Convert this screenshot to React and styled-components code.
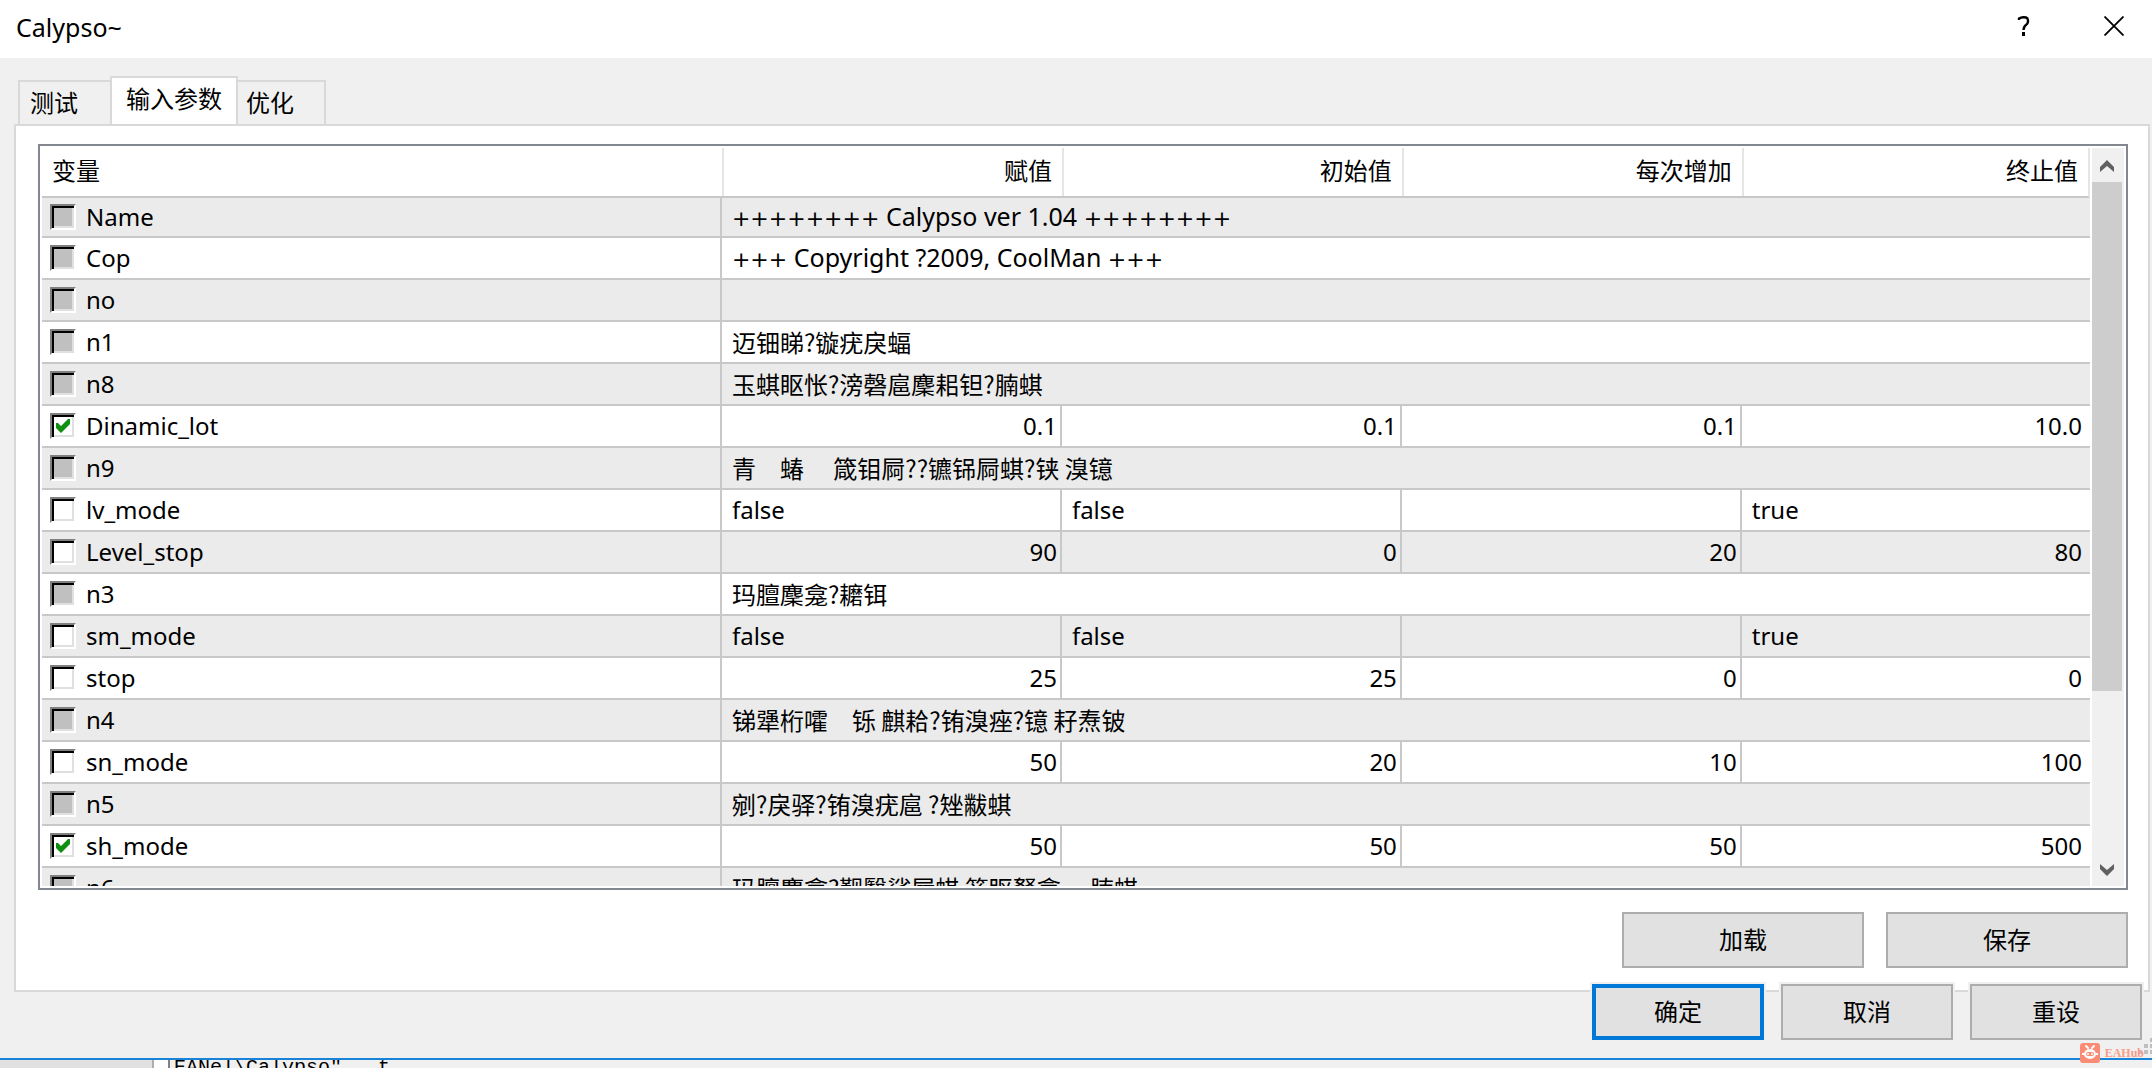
import React, { useState } from "react";
import styled, { createGlobalStyle } from "styled-components";

const GlobalStyle = createGlobalStyle`
  * {
    box-sizing: border-box;
  }

  body {
    margin: 0;
    background-color: #f0f0f0;
    color: #000;
    font-family: "Noto Sans", "Noto Sans CJK SC", sans-serif;
    font-size: 24px;
    line-height: 30px;
  }

  button {
    font-family: "Noto Sans", "Noto Sans CJK SC", sans-serif;
    color: #000;
  }
`;

const Screen = styled.div`
  position: relative;
  display: flex;
  flex-direction: column;
  height: 100vh;
  overflow: hidden;
`;

const Dialog = styled.div`
  flex: 1;
  min-height: 0;
  display: flex;
  flex-direction: column;
  border-bottom: 2px solid #1883d7;
`;

const TitleBar = styled.div`
  display: flex;
  align-items: center;
  justify-content: space-between;
  height: 58px;
  padding: 0 0 4px 16px;
  background-color: #fff;
`;

const Title = styled.h1`
  margin: 0;
  font-size: 25px;
  font-weight: 400;
`;

const TitleActions = styled.div`
  display: flex;
  gap: 14px;
`;

const TitleButton = styled.button`
  display: flex;
  align-items: center;
  justify-content: center;
  width: 76px;
  height: 54px;
  padding: 0 0 2px;
  border: none;
  background: none;
`;

const Tabs = styled.div`
  display: flex;
  align-items: flex-end;
  height: 66px;
  padding-left: 18px;
`;

const Tab = styled.button`
  height: ${(p) => (p.$active ? 50 : 44)}px;
  margin-bottom: ${(p) => (p.$active ? -2 : 0)}px;
  padding: ${(p) => (p.$active ? "0 14px 6px" : "0 30px 0 8px")};
  border: 2px solid #d9d9d9;
  border-bottom: none;
  border-left-width: ${(p) => (p.$last ? 0 : 2)}px;
  border-right-width: ${(p) => (p.$first ? 0 : 2)}px;
  background-color: ${(p) => (p.$active ? "#fff" : "#f0f0f0")};
  font-size: 24px;
  line-height: 30px;

  &:first-child {
    padding: 0 32px 0 10px;
  }
`;

const Pane = styled.div`
  flex: 1;
  min-height: 0;
  display: flex;
  flex-direction: column;
  gap: 22px;
  margin: 0 2px 0 14px;
  padding: 18px 20px 22px 22px;
  border: 2px solid #d9d9d9;
  background-color: #fff;
`;

const List = styled.div`
  flex: 1;
  min-height: 0;
  display: flex;
  gap: 2px;
  padding: 2px;
  border: 2px solid #828790;
`;

const TableArea = styled.div`
  flex: 1;
  min-width: 0;
  overflow: hidden;
`;

const Table = styled.table`
  width: 100%;
  table-layout: fixed;
  border-collapse: separate;
  border-spacing: 0;
`;

const Col = styled.col`
  width: ${(p) => p.$width};
`;

const Th = styled.th`
  height: 50px;
  padding: 0 10px 2px;
  border-bottom: 2px solid #c8c8c8;
  font-weight: 400;
  text-align: right;
  background: linear-gradient(#e5e5e5, #e5e5e5) left / 2px 100% no-repeat;

  &:first-child {
    text-align: left;
    background: none;
  }

  &:last-child {
    border-right: 2px solid #e5e5e5;
  }
`;

const Row = styled.tr`
  background-color: ${(p) => (p.$shaded ? "#ebebeb" : "#fff")};

  &:first-child td {
    height: 40px;
  }
`;

const Td = styled.td`
  height: 42px;
  padding: 0 3px 0 10px;
  border-right: 2px solid #c8c8c8;
  border-bottom: 2px solid #c8c8c8;
  text-align: ${(p) => (p.$number ? "right" : "left")};
  white-space: pre;

  &:first-child {
    padding-left: 8px;
  }

  &:last-child {
    padding-right: 8px;
    border-right: none;
  }
`;

const Cjk = styled.span`
  font-family: "Noto Sans CJK SC", sans-serif;
`;

const Latin = styled.span`
  font-size: 25px;
`;

const Plus = styled.span`
  font-family: "DejaVu Sans", sans-serif;
  font-size: 22px;
`;

const Variable = styled.label`
  display: flex;
  align-items: center;
  gap: 10px;
`;

const Checkbox = styled.input`
  appearance: none;
  width: 26px;
  height: 26px;
  margin: 0;
  border: 2px solid;
  border-color: #808080 #fff #fff #808080;
  background-color: #fff;
  box-shadow: inset 2px 2px 0 #000, inset -2px -2px 0 #e0e0e0;

  &:disabled {
    background-color: #c0c0c0;
  }

  &:checked::before {
    content: "";
    display: block;
    width: 14px;
    height: 14px;
    margin: 4px;
    background-color: #109010;
    clip-path: polygon(0 4px, 2px 4px, 5px 7px, 12px 0, 14px 0, 14px 5px, 5px 14px, 0 9px);
  }
`;

const ScrollBar = styled.div`
  display: flex;
  flex-direction: column;
  width: 32px;
  background-color: #f0f0f0;
`;

const ScrollButton = styled.button`
  display: flex;
  align-items: center;
  justify-content: center;
  width: 30px;
  height: 34px;
  padding: 2px 0 0;
  border: none;
  background: none;
`;

const ScrollTrack = styled.div`
  flex: 1;
`;

const ScrollThumb = styled.div`
  width: 30px;
  height: 76%;
  background-color: #cdcdcd;
`;

const PaneActions = styled.div`
  display: flex;
  justify-content: flex-end;
  gap: 22px;
`;

const Footer = styled.div`
  display: flex;
  justify-content: flex-end;
  gap: 17px;
  margin-top: -8px;
  padding: 0 10px 18px;
`;

const Button = styled.button`
  width: ${(p) => (p.$wide ? 242 : 172)}px;
  height: 56px;
  padding: 0 0 4px;
  border: ${(p) => (p.$primary ? "4px solid #0078d7" : "2px solid #adadad")};
  background-color: #e1e1e1;
  box-shadow: ${(p) => (p.$wide ? "none" : "0 0 0 2px #f0f0f0")};
  font-size: 24px;
`;

const Behind = styled.div`
  display: flex;
  height: 8px;
  overflow: hidden;
  background-color: #f0f0f0;
`;

const BehindPanel = styled.div`
  width: 154px;
  border-right: 2px solid #adadad;
  background-color: #e1e1e1;
`;

const BehindPath = styled.div`
  margin-left: 14px;
  padding-left: 4px;
  border-left: 2px solid #828282;
  font-family: "Liberation Mono", monospace;
  font-size: 20px;
  line-height: 16px;
  white-space: pre;
  box-shadow: -14px 0 0 #fff;
`;

const Grip = styled.svg`
  position: absolute;
  right: 0;
  bottom: 14px;
`;

const Badge = styled.div`
  position: absolute;
  right: 8px;
  bottom: 5px;
  display: flex;
  align-items: center;
  gap: 5px;
  color: #f99b87;
  font-family: "Liberation Serif", serif;
  font-size: 12px;
  font-weight: 700;
  line-height: 20px;
`;

const columns = [
  { title: "变量", width: "33.2%" },
  { title: "赋值", width: "16.6%" },
  { title: "初始值", width: "16.6%" },
  { title: "每次增加", width: "16.6%" },
  { title: "终止值", width: "17%" },
];

const initialParams = [
  { name: "Name", text: "++++++++ Calypso ver 1.04 ++++++++" },
  { name: "Cop", text: "+++ Copyright ?2009, CoolMan +++" },
  { name: "no", text: "" },
  { name: "n1", text: "迈钿睇?镟疣戾蝠", cjk: true },
  { name: "n8", text: "玉蜞眍怅?滂磬扈麇耜钽?腩蜞", cjk: true },
  { name: "Dinamic_lot", values: ["0.1", "0.1", "0.1", "10.0"], checked: true },
  { name: "n9", text: "青　蝽　 箴钼屙??镳铞屙蜞?铗 溴镱", cjk: true },
  { name: "lv_mode", values: ["false", "false", "", "true"] },
  { name: "Level_stop", values: ["90", "0", "20", "80"] },
  { name: "n3", text: "玛膻麇龛?耱铒", cjk: true },
  { name: "sm_mode", values: ["false", "false", "", "true"] },
  { name: "stop", values: ["25", "25", "0", "0"] },
  { name: "n4", text: "锑犟桁嚯　铄 麒耠?铕溴痤?镱 耔焘铍", cjk: true },
  { name: "sn_mode", values: ["50", "20", "10", "100"] },
  { name: "n5", text: "剜?戾驿?铕溴疣扈 ?矬黻蜞", cjk: true },
  { name: "sh_mode", values: ["50", "50", "50", "500"], checked: true },
  { name: "n6", text: "玛膻麇龛?觐翳鲨屙蜞 箪眍驽龛　 腩蜞", cjk: true },
];

const isNumber = (value) => value !== "" && !isNaN(value);

const ParamText = ({ text, cjk }) => {
  if (cjk) return <Cjk>{text}</Cjk>;

  return (
    <Latin>
      {text
        .split(/(\++)/)
        .map((part, i) =>
          part.startsWith("+") ? <Plus key={i}>{part}</Plus> : part
        )}
    </Latin>
  );
};

const App = () => {
  const [params, setparams] = useState(initialParams);

  const toggle = (name) => {
    setparams(
      params.map((p) => (p.name === name ? { ...p, checked: !p.checked } : p))
    );
  };

  return (
    <Screen>
      <GlobalStyle />
      <Dialog>
        <TitleBar>
          <Title>Calypso~</Title>
          <TitleActions>
            <TitleButton aria-label="Help">
              <svg width="14" height="20" viewBox="0 0 14 20" fill="none">
                <path
                  d="M2 4V2.500C4 1.300 7 1 9 1.500c2.500.8 2.500 4.500 1 6.500C8 9.500 6.500 10.500 6.500 14"
                  stroke="#000"
                  strokeWidth="2.400"
                />
                <rect x="5" y="16" width="3" height="4" fill="#000" />
              </svg>
            </TitleButton>
            <TitleButton aria-label="Close">
              <svg width="20" height="20" viewBox="0 0 20 20">
                <path d="M.5.5l19 19M19.500.5l-19 19" stroke="#000" strokeWidth="1.800" />
              </svg>
            </TitleButton>
          </TitleActions>
        </TitleBar>

        <Tabs role="tablist">
          <Tab role="tab" $first>
            测试
          </Tab>
          <Tab role="tab" $active aria-selected="true">
            输入参数
          </Tab>
          <Tab role="tab" $last>
            优化
          </Tab>
        </Tabs>

        <Pane>
          <List>
            <TableArea>
              <Table>
                <colgroup>
                  {columns.map((c) => (
                    <Col key={c.title} $width={c.width} />
                  ))}
                </colgroup>
                <thead>
                  <tr>
                    {columns.map((c) => (
                      <Th key={c.title}>{c.title}</Th>
                    ))}
                  </tr>
                </thead>
                <tbody>
                  {params.map((p, i) => (
                    <Row key={p.name} $shaded={i % 2 === 0}>
                      <Td>
                        <Variable>
                          <Checkbox
                            type="checkbox"
                            disabled={!p.values}
                            checked={!!p.checked}
                            onChange={() => toggle(p.name)}
                          />
                          {p.name}
                        </Variable>
                      </Td>
                      {p.values ? (
                        p.values.map((value, n) => (
                          <Td key={n} $number={isNumber(value)}>
                            {value}
                          </Td>
                        ))
                      ) : (
                        <Td colSpan={4}>
                          <ParamText text={p.text} cjk={p.cjk} />
                        </Td>
                      )}
                    </Row>
                  ))}
                </tbody>
              </Table>
            </TableArea>

            <ScrollBar>
              <ScrollButton aria-label="Scroll up">
                <svg width="14" height="12" viewBox="0 0 14 12">
                  <path d="M7 0l7 7v5l-7-6-7 6V7z" fill="#606060" />
                </svg>
              </ScrollButton>
              <ScrollTrack>
                <ScrollThumb />
              </ScrollTrack>
              <ScrollButton aria-label="Scroll down">
                <svg width="14" height="12" viewBox="0 0 14 12">
                  <path d="M7 12l7-7V0L7 6 0 0v5z" fill="#606060" />
                </svg>
              </ScrollButton>
            </ScrollBar>
          </List>

          <PaneActions>
            <Button $wide>加载</Button>
            <Button $wide>保存</Button>
          </PaneActions>
        </Pane>

        <Footer>
          <Button $primary>确定</Button>
          <Button>取消</Button>
          <Button>重设</Button>
        </Footer>
      </Dialog>

      <Behind>
        <BehindPanel />
        <BehindPath>{'EANel\\Calypso"   t'}</BehindPath>
      </Behind>

      <Grip width="14" height="16" viewBox="0 0 14 16" fill="#bfbfbf">
        <path d="M12 0h4v4h-4zM6 6h4v4H6zM12 6h4v4h-4zM0 12h4v4H0zM6 12h4v4H6zM12 12h4v4h-4z" />
      </Grip>

      <Badge>
        <svg width="20" height="20" viewBox="0 0 20 20">
          <rect width="20" height="20" rx="3" fill="#fa8b74" />
          <path
            d="M6 3l2 2M14 3l-2 2"
            stroke="#fff"
            strokeWidth="2"
            strokeLinecap="round"
          />
          <ellipse cx="10" cy="11" rx="6" ry="5" fill="#fff" />
          <path d="M3 10v2M17 10v2" stroke="#fff" strokeWidth="2" />
          <rect x="6" y="9" width="8" height="4" rx="2" fill="#fa8b74" />
          <circle cx="8" cy="11" r="1" fill="#fff" />
          <circle cx="12" cy="11" r="1" fill="#fff" />
        </svg>
        EAHub
      </Badge>
    </Screen>
  );
};

export default App;
